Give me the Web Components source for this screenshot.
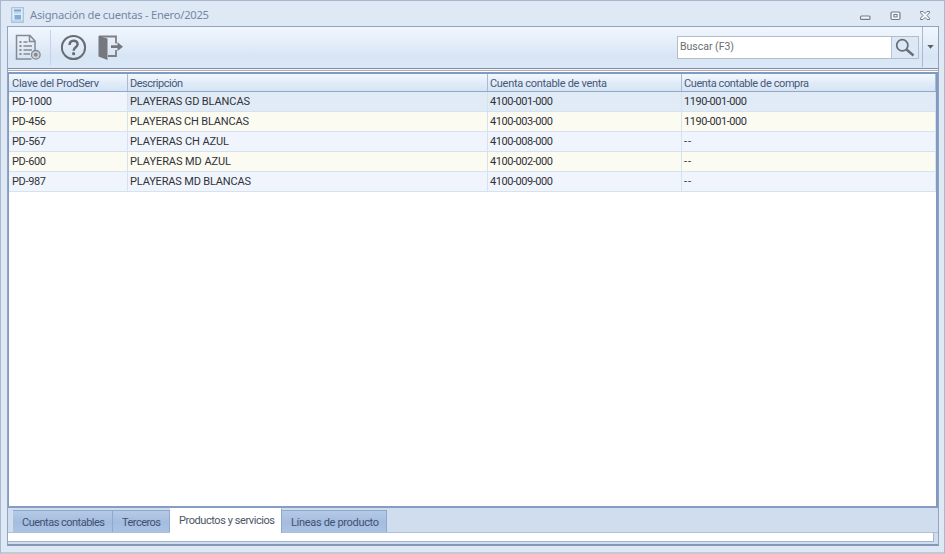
<!DOCTYPE html>
<html lang="es">
<head>
<meta charset="utf-8">
<title>Asignación de cuentas</title>
<style>
  body { margin: 0; font-family: Roboto, "Liberation Sans", sans-serif; font-size: 11px; color: #303238; }
</style>
</head>
<body>
<app-window>
  <title-bar slot="title"><fit-text width="179">Asignación de cuentas - Enero/2025</fit-text></title-bar>
  <tool-bar slot="tools"><search-box><fit-text width="54">Buscar (F3)</fit-text></search-box></tool-bar>
  <account-grid></account-grid>
  <tab-strip slot="tabs">
    <tab-item style="width:100px"><fit-text width="83">Cuentas contables</fit-text></tab-item>
    <tab-item style="width:57px"><fit-text width="39">Terceros</fit-text></tab-item>
    <tab-item active style="width:112px"><fit-text width="96">Productos y servicios</fit-text></tab-item>
    <tab-item style="width:105px"><fit-text width="88">Líneas de producto</fit-text></tab-item>
  </tab-strip>
</app-window>

<script>
const attach = (el, html) => {
  const root = el.attachShadow({ mode: 'open' });
  root.innerHTML = html;
  return root;
};

// Single line of text tracked to a given width
class FitText extends HTMLElement {
  constructor() {
    super();
    attach(this, `
      <style>
        :host { display: block; flex: none; white-space: nowrap; }
        span { display: inline-block; }
      </style>
      <span><slot></slot></span>`);
  }

  connectedCallback() {
    const span = this.shadowRoot.querySelector('span');
    const natural = span.getBoundingClientRect().width;
    const count = this.textContent.length;
    span.style.letterSpacing = `${(this.getAttribute('width') - natural) / (count - 1)}px`;
  }
}

class AppWindow extends HTMLElement {
  constructor() {
    super();
    attach(this, `
      <style>
        :host {
          display: flex; flex-direction: column; box-sizing: border-box;
          width: 945px; height: 554px; padding: 0 5px 6px 6px;
          background: #dfe9f5; border: solid #a9b8cf; border-width: 1px 1px 2px 1px;
          border-bottom-color: #c3c9d2;
        }
        .client {
          flex: 1; display: flex; flex-direction: column; box-sizing: border-box;
          border: 1px solid #91a3bd; border-width: 1px 1px 2px 1px; border-bottom-color: #8498b8;
          background: #cfddee;
        }
        .body {
          flex: 1; display: flex; flex-direction: column; box-sizing: border-box;
          border: solid #7f9bc2; border-width: 2px 2px 2px 1px; background: #fff;
          border-bottom-color: #849dc0;
        }
      </style>
      <slot name="title"></slot>
      <div class="client">
        <slot name="tools"></slot>
        <div class="body"><slot></slot></div>
        <slot name="tabs"></slot>
      </div>`);
  }
}

class TitleBar extends HTMLElement {
  constructor() {
    super();
    attach(this, `
      <style>
        :host {
          display: flex; align-items: center; height: 25px; flex: none; box-sizing: border-box;
          padding: 2px 7px 0 4px; font: 11.2px "Noto Sans", "Open Sans", sans-serif; color: #7487a5;
        }
        .icon { margin-right: 6px; }
        .buttons { margin-left: auto; padding-top: 2px; }
        svg { display: block; }
      </style>
      <svg class="icon" width="13" height="16" viewBox="0 0 13 16">
        <rect x=".7" y=".7" width="11.6" height="14.6" fill="#dcecf8" stroke="#9dbbd6"/>
        <path d="M3 3.5h7" stroke="#7ba2c8" stroke-width="2"/>
        <path d="M3 6h7" stroke="#a9c9e4"/>
        <rect x="3.5" y="8" width="6.5" height="4.5" fill="#85add3"/>
        <path d="M1 14h11" stroke="#a9c6df"/>
      </svg>
      <slot></slot>
      <svg class="buttons" width="74" height="14" viewBox="0 0 74 14" fill="none" stroke="#737a85">
        <rect x="2.5" y="7" width="9.5" height="3.4" rx="1" stroke-width="1.1" fill="#f2f6fb"/>
        <rect x="33" y="3" width="9" height="7.5" rx="1.2" stroke-width="1.2" fill="#f2f6fb"/>
        <rect x="35.9" y="5.5" width="3.2" height="2.4"/>
        <path d="M62.5 2.500h2.500l2 2 2-2h2.500v1.300l-2.500 2.700 2.500 2.700v1.300h-2.500l-2-2-2 2h-2.500v-1.300l2.500-2.700-2.500-2.700z" fill="#f2f6fb"/>
      </svg>`);
  }
}

class ToolBar extends HTMLElement {
  constructor() {
    super();
    attach(this, `
      <style>
        :host {
          display: flex; align-items: center; height: 45px; flex: none; box-sizing: border-box;
          padding: 0 0 4px 7px; border-bottom: 1px solid #fff;
          background:
            linear-gradient(#858b9a, #858b9a) 0 41px / 100% 1px no-repeat,
            linear-gradient(#f4f8fd, #f4f8fd) 0 42px / 100% 1px no-repeat,
            linear-gradient(#a9aaba, #a9aaba) 0 43px / 100% 1px no-repeat,
            linear-gradient(#f0f6fe, #e3edf9 40%, #d7e5f5 65%, #dbe8f7);
        }
        svg { display: block; flex: none; }
        .sep { width: 1px; height: 35px; background: #c5d2e3; margin: 0 9px 0 8px; }
        .exit { margin-left: 10px; }
        ::slotted(search-box) { margin-left: auto; }
        .drop {
          display: flex; justify-content: center; align-items: center; align-self: stretch;
          width: 15px; margin-left: 3px; border-left: 1px solid #a9b8cd;
        }
      </style>
      <svg width="27" height="27" viewBox="0 0 27 27" fill="none" stroke="#858a91" stroke-width="1.5">
        <path d="M20 16.500V7l-5-5.500H1.500v23.500H16.500M14.500 2v5.500h5.500"/>
        <path d="M4.500 8h2M4.500 12h2M4.500 16h2M4.500 20h2" stroke-width="2"/>
        <path d="M8.500 8h4M8.500 12h8.500M8.500 16h8.500M8.500 20h6.500"/>
        <circle cx="20.8" cy="20.8" r="4.3" fill="#cfd6df" stroke-width="1.3"/>
        <circle cx="20.8" cy="20.8" r="2" fill="#858a91" stroke="none"/>
      </svg>
      <div class="sep"></div>
      <svg width="27" height="27" viewBox="0 0 27 27" fill="none" stroke="#686c73">
        <circle cx="13.5" cy="13.5" r="11.6" stroke-width="2"/>
        <path d="M9.600 11c0-5.500 8-5.500 8-.8 0 3-4 3-4 6.500" stroke-width="2.5"/>
        <circle cx="13.6" cy="19.7" r="1.6" fill="#686c73" stroke="none"/>
      </svg>
      <svg class="exit" width="27" height="27" viewBox="0 0 27 27">
        <path d="M2 2.500h17v7M19 16v6h-8" fill="none" stroke="#7d8187" stroke-width="1.8"/>
        <path d="M1.500 2l9 2.500V26l-9-3.500z" fill="#75797f"/>
        <path d="M14 11.300h6.500V8.300l5.500 4.400-5.500 4.400v-3H14z" fill="#75797f"/>
      </svg>
      <slot></slot>
      <div class="drop">
        <svg width="7" height="4" viewBox="0 0 7 4"><path d="M.3 0h6.400L3.500 3.700z" fill="#5a5f68"/></svg>
      </div>`);
  }
}

class SearchBox extends HTMLElement {
  constructor() {
    super();
    attach(this, `
      <style>
        :host {
          display: flex; box-sizing: border-box; width: 242px; height: 23px;
          border: 1px solid #b5bdc9; background: #fff; color: #696c72; font-size: 10.5px;
        }
        .field { flex: 1; padding: 3px 0 0 2px; }
        .button {
          display: flex; align-items: center; justify-content: center; width: 26px;
          border-left: 1px solid #b5c4d8; background: #dce8f5;
        }
      </style>
      <div class="field"><slot></slot></div>
      <div class="button">
        <svg width="20" height="19" viewBox="0 0 20 19" fill="none" stroke="#686d77">
          <circle cx="7.3" cy="7.3" r="5.6" stroke-width="1.7"/>
          <path d="M11.500 11.500l7 6" stroke-width="2.4"/>
        </svg>
      </div>`);
  }
}

class AccountGrid extends HTMLElement {
  constructor() {
    super();
    const columns = [
      ['Clave del ProdServ', 87],
      ['Descripción', 53],
      ['Cuenta contable de venta', 117],
      ['Cuenta contable de compra', 125],
    ];
    const rows = [
      [['PD-1000', 40], ['PLAYERAS GD BLANCAS', 120], ['4100-001-000', 63], ['1190-001-000', 63]],
      [['PD-456', 34], ['PLAYERAS CH BLANCAS', 119], ['4100-003-000', 63], ['1190-001-000', 63]],
      [['PD-567', 34], ['PLAYERAS CH AZUL', 99], ['4100-008-000', 63], ['--', 7]],
      [['PD-600', 34], ['PLAYERAS MD AZUL', 101], ['4100-002-000', 63], ['--', 7]],
      [['PD-987', 34], ['PLAYERAS MD BLANCAS', 121], ['4100-009-000', 63], ['--', 7]],
    ];
    const cell = ([text, width]) => `<div><fit-text width="${width}">${text}</fit-text></div>`;
    attach(this, `
      <style>
        :host { display: block; }
        .row {
          display: grid; grid-template-columns: 119px 360px 194px 1fr;
          height: 20px; box-sizing: border-box; border-bottom: 1px solid #d5e3f1;
          line-height: 19px; background: #f0f5fd;
        }
        .row:nth-of-type(odd) { background: #fcfbf1; }
        .row > div { box-sizing: border-box; padding-left: 2px; border-right: 1px solid #d5e3f1; }
        .row.selected { background: #e1ebf5; }
        .row.selected > div:first-child { background: #f0f5fd; }
        .row.head {
          height: 18px; line-height: 19px; color: #475877; border-bottom-color: #91a9c8;
          background: linear-gradient(#f3f8fe, #e2ecf8 50%, #d5e4f5);
        }
        .row.head > div { height: 17px; border-right-color: #a5bbd6; }
        .row > div:first-child { padding-left: 3px; }
      </style>
      <div class="row head">${columns.map(cell).join('')}</div>
      ${rows.map((r, i) => `<div class="row${i ? '' : ' selected'}">${r.map(cell).join('')}</div>`).join('')}`);
  }
}

class TabStrip extends HTMLElement {
  constructor() {
    super();
    attach(this, `
      <style>
        :host { display: block; height: 36px; flex: none; }
        .tabs {
          display: flex; align-items: flex-end; height: 25px; padding-left: 5px;
          box-sizing: border-box; border-bottom: 1px solid #abc0db;
        }
        .page {
          height: 9px; margin-right: 4px; box-sizing: border-box;
          background: #fff; border: solid #a3b5cf; border-width: 0 1px 1px 0;
        }
      </style>
      <div class="tabs"><slot></slot></div>
      <div class="page"></div>`);
  }
}

class TabItem extends HTMLElement {
  constructor() {
    super();
    attach(this, `
      <style>
        :host {
          display: flex; align-items: center; height: 22px; padding: 2px 0 0 9px;
          box-sizing: border-box; color: #3f5273; border: solid #8fa9cc; border-width: 1px 1px 0 0;
          background: linear-gradient(#b5cae7, #a4bcde 55%, #acc4e3);
        }
        :host([active]) {
          height: 25px; margin-bottom: -1px; padding-bottom: 4px; background: #fff;
          color: #4b5566; border-color: #fff; border-right-color: #8fa9cc;
        }
      </style>
      <slot></slot>`);
  }
}

customElements.define('app-window', AppWindow);
customElements.define('title-bar', TitleBar);
customElements.define('tool-bar', ToolBar);
customElements.define('search-box', SearchBox);
customElements.define('account-grid', AccountGrid);
customElements.define('tab-strip', TabStrip);
customElements.define('tab-item', TabItem);
// last, so the fonts set by its parents apply when it measures
customElements.define('fit-text', FitText);
</script>
</body>
</html>
